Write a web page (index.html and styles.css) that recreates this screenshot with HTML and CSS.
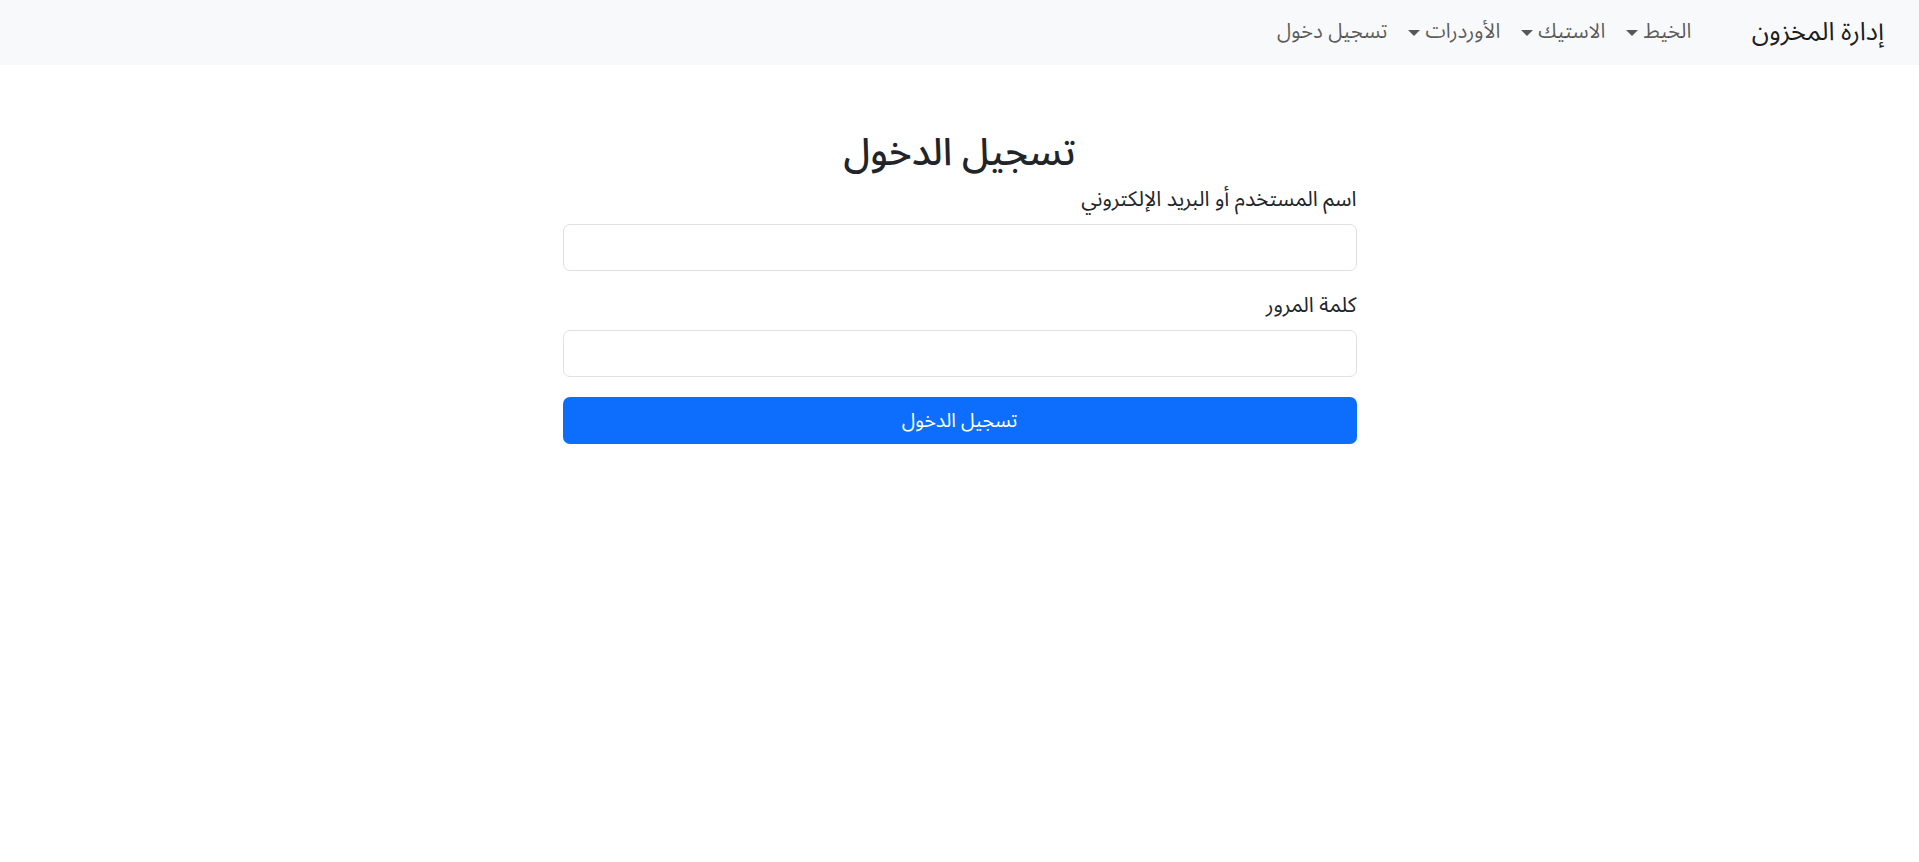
FILE: index.html
```html
<!DOCTYPE html>
<html lang="ar" dir="rtl">
<head>
  <meta charset="UTF-8" />
  <meta name="viewport" content="width=device-width, initial-scale=1.0"/>
  <title>تسجيل الدخول</title>
  <link rel="stylesheet" href="styles.css">
</head>
<body>
  <nav class="navbar">
    <a class="brand" href="#">إدارة المخزون</a>
    <ul class="nav">
      <li><a class="nav-link dropdown" href="#">الخيط</a></li>
      <li><a class="nav-link dropdown" href="#">الاستيك</a></li>
      <li><a class="nav-link dropdown" href="#">الأوردرات</a></li>
      <li><a class="nav-link" href="#">تسجيل دخول</a></li>
    </ul>
  </nav>

  <div class="container">
    <h2>تسجيل الدخول</h2>
    <form id="loginForm">
      <div class="field">
        <label for="username">اسم المستخدم أو البريد الإلكتروني</label>
        <input type="text" id="username" />
      </div>
      <div class="field">
        <label for="password">كلمة المرور</label>
        <input type="password" id="password" />
      </div>
      <button type="submit">تسجيل الدخول</button>
    </form>
  </div>
</body>
</html>
```

FILE: styles.css
```css
:root {
  --text: #212529;
  --muted: rgba(0, 0, 0, 0.65);
  --border: #dee2e6;
  --primary: #0d6efd;
  --radius: 7px;
}

* {
  box-sizing: border-box;
}

body {
  margin: 0;
  font-family: "Noto Sans Arabic", "DejaVu Sans", sans-serif;
  font-size: 19px;
  line-height: 1.5;
  color: var(--text);
  background: #fff;
}

.navbar {
  display: flex;
  align-items: center;
  height: 65px;
  padding: 0 35px;
  background-color: #f8f9fa;
}

.brand {
  font-size: 25.5px;
  color: rgba(0, 0, 0, 0.9);
  text-decoration: none;
  margin-left: 50px;
}

.nav {
  display: flex;
  list-style: none;
  margin: 0;
  padding: 0;
}

.nav-link {
  display: flex;
  align-items: center;
  padding: 0 10.5px;
  font-size: 20.5px;
  color: var(--muted);
  text-decoration: none;
}

.dropdown::after {
  content: "";
  margin-right: 5px;
  border-top: 6px solid;
  border-left: 6px solid transparent;
  border-right: 6px solid transparent;
}

.container {
  width: 794px;
  margin: 0 auto;
  padding-top: 65px;
}

h2 {
  margin: 0 0 9px;
  font-size: 38px;
  font-weight: 500;
  line-height: 46px;
  text-align: center;
}

.field {
  margin-bottom: 20px;
}

label {
  display: block;
  margin-bottom: 10px;
  font-size: 21px;
  line-height: 29px;
}

input {
  display: block;
  width: 100%;
  height: 47px;
  padding: 7px 14px;
  font: inherit;
  border: 1px solid var(--border);
  border-radius: var(--radius);
  background-color: #fff;
}

input:focus {
  outline: none;
  border-color: #86b7fe;
}

button {
  display: block;
  width: 100%;
  height: 47px;
  font: inherit;
  font-size: 19.5px;
  color: #fff;
  background-color: var(--primary);
  border: none;
  border-radius: var(--radius);
  cursor: pointer;
}

button:hover {
  background-color: #0b5ed7;
}
```
